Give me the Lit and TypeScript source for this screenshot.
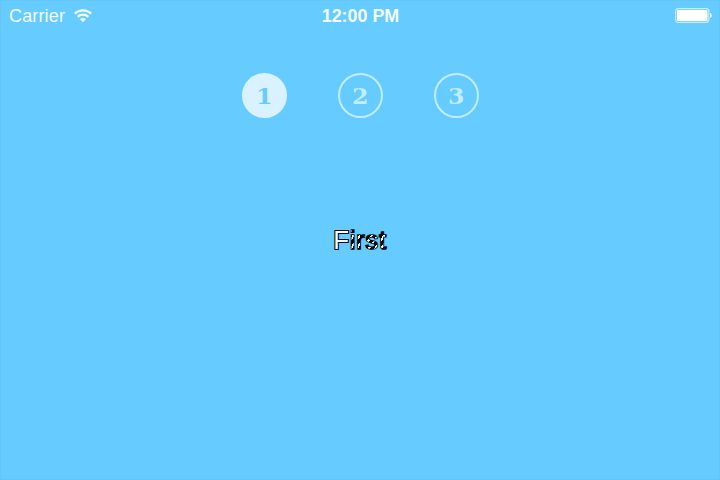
import { LitElement, html, css } from "lit";
import { customElement, state } from "lit/decorators.js";
import { classMap } from "lit/directives/class-map.js";

@customElement("app-root")
export class AppRoot extends LitElement {
  @state() private selected = 1;

  static styles = css`
    :host {
      display: flex;
      flex-direction: column;
      box-sizing: border-box;
      width: 100%;
      height: 100vh;
      background: #66cbff;
      box-shadow: inset 0 0 0 1px #65c5f6;
      font-family: "Liberation Sans", Arial, sans-serif;
      overflow: hidden;
    }
    .status {
      display: grid;
      grid-template-columns: 1fr auto 1fr;
      align-items: center;
      height: 31px;
      padding: 0 8px 0 9px;
      color: #f2fcff;
      font-size: 18px;
      line-height: 31px;
    }
    .carrier {
      display: flex;
      align-items: center;
      gap: 9px;
      letter-spacing: 0.15px;
    }
    .carrier span,
    .time {
      height: 31px;
      line-height: 33px;
    }
    .time {
      font-weight: 700;
      letter-spacing: -0.05px;
    }
    .battery {
      justify-self: end;
    }
    svg {
      display: block;
    }
    .steps {
      display: flex;
      justify-content: center;
      gap: 51px;
      padding: 42px 0 0 1px;
    }
    .step {
      box-sizing: border-box;
      width: 45px;
      height: 45px;
      margin-bottom: 1px;
      padding: 0;
      border: 1.8px solid #c3edfc;
      border-width: 2px;
      border-radius: 50%;
      background: none;
      color: #c3edfc;
      font: 700 23px/41px "DejaVu Serif", serif;
      text-align: center;
    }
    .digit {
      display: block;
      transform: scaleX(1.03);
    }
    .active {
      border-color: #d9f2ff;
      background: #d9f2ff;
      color: #66cbff;
    }
    .title {
      margin: 106px 0 0;
      text-align: center;
      font-size: 26px;
      line-height: 30px;
      font-weight: 400;
      letter-spacing: 0.6px;
    }
    .glyph {
      position: relative;
      color: #05080a;
      -webkit-text-stroke: 1.6px #05080a;
      paint-order: stroke fill;
    }
    .glyph::after {
      content: attr(data-text);
      position: absolute;
      left: 0;
      top: 0;
      line-height: 30px;
      color: transparent;
      -webkit-text-stroke: 0;
      background: repeating-linear-gradient(125deg, transparent 0 3px, #fff 3px 5px);
      -webkit-background-clip: text;
      background-clip: text;
    }
    .light {
      -webkit-text-stroke-width: 2px;
    }
    .light::after {
      background: linear-gradient(#fff, #fff);
      -webkit-background-clip: text;
      background-clip: text;
    }
  `;

  render() {
    return html`
      <header class="status">
        <div class="carrier">
          <span>Carrier</span>
          <svg width="18" height="14" viewBox="0 0 18 14" fill="none" stroke="#f2fcff" stroke-width="2.3">
            <path d="M.8 4.7C5.4.3 12.6.3 17.2 4.7M3.7 7.8C6.7 5 11.3 5 14.3 7.8" />
            <path d="M5.9 10.1C7.7 8.5 10.3 8.5 12.1 10.1L9 13.3Z" fill="#f2fcff" stroke="none" />
          </svg>
        </div>
        <div class="time">12:00 PM</div>
        <svg class="battery" width="37" height="15" viewBox="0 0 37 15">
          <rect x=".7" y=".7" width="33.1" height="13.6" rx="2.5" fill="none" stroke="#c4efff" stroke-width="1.2" />
          <rect x="2" y="2" width="30.5" height="11" rx="1" fill="#fff" />
          <path d="M35 5C37.5 5.5 37.5 9.5 35 10Z" fill="#e2f7ff" />
        </svg>
      </header>
      <nav class="steps">
        ${[1, 2, 3].map(
          (n) => html`<button
            class=${classMap({ step: true, active: n === this.selected })}
            @click=${() => (this.selected = n)}
          ><span class="digit">${n}</span></button>`
        )}
      </nav>
      <h1 class="title"><span class="glyph light" data-text="F">F</span><span class="glyph" data-text="irst">irst</span></h1>
    `;
  }
}
